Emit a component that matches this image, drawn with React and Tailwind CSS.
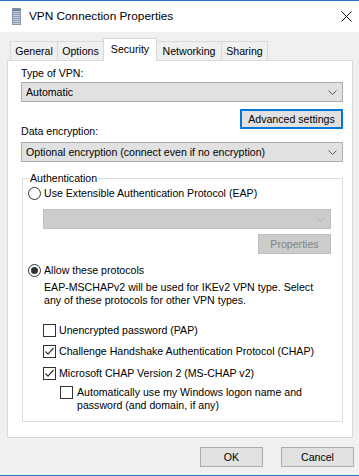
import React from "react";

function Chevron({ disabled }) {
  return (
    <svg width="9" height="5" viewBox="0 0 9 5" className="shrink-0">
      <path d="M0.5 0.5 L4.5 4.5 L8.5 0.5" fill="none" stroke={disabled ? "#a8a8a8" : "#5a5a5a"} strokeWidth="1" />
    </svg>
  );
}

function Select({ text, disabled, className }) {
  return (
    <div
      className={
        (disabled
          ? "bg-[#cccccc] border-[#bfbfbf] "
          : "bg-[#e1e1e1] border-[#adadad] ") +
        "h-[20px] flex items-center border pl-[4px] pr-[5px] " +
        (className || "")
      }
    >
      <span className="flex-1 whitespace-nowrap">{text}</span>
      <Chevron disabled={disabled} />
    </div>
  );
}

function Radio({ checked }) {
  return (
    <svg width="13" height="13" viewBox="0 0 13 13" className="shrink-0">
      <circle cx="6.5" cy="6.5" r="6" fill="#fff" stroke="#333" strokeWidth="1" />
      {checked && <circle cx="6.5" cy="6.5" r="3.5" fill="#333" />}
    </svg>
  );
}

function Check({ checked }) {
  return (
    <svg width="13" height="13" viewBox="0 0 13 13" className="shrink-0">
      <rect x="0.5" y="0.5" width="12" height="12" fill="#fff" stroke="#333" strokeWidth="1" />
      {checked && (
        <path d="M2.5 6.5 L5 9.2 L10.5 3" fill="none" stroke="#333" strokeWidth="1.2" />
      )}
    </svg>
  );
}

function TitleIcon() {
  return (
    <svg width="9" height="17" viewBox="0 0 9 17" className="shrink-0">
      <rect x="0.5" y="0.5" width="8" height="16" fill="#c3cddb" stroke="#8595ad" />
      <rect x="1" y="1" width="7" height="2" fill="#6f7f98" />
      <rect x="1" y="4" width="7" height="1" fill="#8d9cb3" />
      <rect x="1" y="6" width="7" height="1" fill="#8d9cb3" />
      <rect x="1" y="8" width="7" height="1" fill="#8d9cb3" />
      <rect x="1" y="10" width="7" height="1" fill="#8d9cb3" />
      <rect x="1" y="12" width="7" height="1" fill="#8d9cb3" />
      <rect x="1" y="14" width="7" height="1" fill="#8d9cb3" />
    </svg>
  );
}

function Tab({ label, width, selected }) {
  return (
    <div
      className={
        (selected
          ? "h-[23px] bg-white mb-[-1px] relative z-20 pb-[2px] "
          : "h-[19px] bg-[#f0f0f0] ") +
        "-ml-px first:ml-0 border-t border-l border-r border-[#d9d9d9] flex items-center justify-center whitespace-nowrap"
      }
      style={{ width }}
    >
      {label}
    </div>
  );
}

export default function App() {
  return (
    <div className="w-[359px] h-[476px] bg-[#f0f0f0] border-t border-b border-[#2b79d0] flex flex-col font-['Liberation_Sans',Arial,sans-serif] text-[10.6px] leading-[13px] text-black overflow-hidden">
      {/* Title bar */}
      <div className="h-[31px] shrink-0 bg-white flex items-center">
        <div className="ml-[12px]">
          <TitleIcon />
        </div>
        <span className="ml-[8px] text-[11.8px] leading-[15px]">VPN Connection Properties</span>
        <svg width="11" height="11" viewBox="0 0 11 11" className="ml-auto mr-[7px]">
          <path d="M0.5 0.5 L10.5 10.5 M10.5 0.5 L0.5 10.5" stroke="#111" strokeWidth="1" />
        </svg>
      </div>

      {/* Tabs */}
      <div className="mt-[6px] h-[22px] shrink-0 flex items-end pl-[10px] relative z-10">
        <Tab label="General" width={48} />
        <Tab label="Options" width={47} />
        <Tab label="Security" width={54} selected />
        <Tab label="Networking" width={66} />
        <Tab label="Sharing" width={47} />
      </div>

      {/* Tab panel */}
      <div className="ml-[7px] w-[346px] h-[378px] shrink-0 bg-white border border-[#d9d9d9] pl-[13px] pr-[9px] pt-[6px] flex flex-col">
        <div className="h-[13px]">Type of VPN:</div>
        <Select text="Automatic" className="mt-[2px]" />
        <div className="mt-[7px] flex justify-end">
          <div className="h-[20px] w-[103px] border-2 border-[#0078d7] bg-[#e1e1e1] flex items-center justify-center whitespace-nowrap">
            Advanced settings
          </div>
        </div>
        <div className="mt-[-4px] h-[13px]">Data encryption:</div>
        <Select text="Optional encryption (connect even if no encryption)" className="mt-[4px]" />

        {/* Authentication group */}
        <div className="mt-[16px] ml-[1px] relative border border-[#dcdcdc] pl-[5px] pt-[8px] pb-[9px] flex flex-col">
          <span className="absolute left-[6px] top-[-7px] px-[1px] bg-white leading-[13px]">
            Authentication
          </span>
          <div className="h-[13px] flex items-center gap-[3px] whitespace-nowrap">
            <Radio />
            <span>Use Extensible Authentication Protocol (EAP)</span>
          </div>
          <Select text="" disabled className="mt-[9px] ml-[15px] mr-[11px]" />
          <div className="mt-[5px] mr-[11px] flex justify-end">
            <div className="h-[20px] w-[73px] border border-[#bfbfbf] bg-[#cccccc] text-[#838383] flex items-center justify-center">
              Properties
            </div>
          </div>
          <div className="mt-[10px] h-[13px] flex items-center gap-[3px] whitespace-nowrap">
            <Radio checked />
            <span>Allow these protocols</span>
          </div>
          <div className="mt-[4px] ml-[16px] whitespace-nowrap">
            EAP-MSCHAPv2 will be used for IKEv2 VPN type. Select
            <br />
            any of these protocols for other VPN types.
          </div>
          <div className="mt-[17px] ml-[15px] h-[13px] flex items-center gap-[3px] whitespace-nowrap">
            <Check />
            <span>Unencrypted password (PAP)</span>
          </div>
          <div className="mt-[8px] ml-[15px] h-[13px] flex items-center gap-[3px] whitespace-nowrap">
            <Check checked />
            <span>Challenge Handshake Authentication Protocol (CHAP)</span>
          </div>
          <div className="mt-[9px] ml-[15px] h-[13px] flex items-center gap-[3px] whitespace-nowrap">
            <Check checked />
            <span>Microsoft CHAP Version 2 (MS-CHAP v2)</span>
          </div>
          <div className="mt-[6px] ml-[32px] flex items-start gap-[4px] whitespace-nowrap">
            <Check />
            <span>
              Automatically use my Windows logon name and
              <br />
              password (and domain, if any)
            </span>
          </div>
        </div>
      </div>

      {/* Bottom buttons */}
      <div className="mt-[9px] flex justify-end gap-[18px] mr-[5px]">
        <div className="h-[20px] w-[63px] border border-[#adadad] bg-[#e1e1e1] flex items-center justify-center">
          OK
        </div>
        <div className="h-[20px] w-[73px] border border-[#adadad] bg-[#e1e1e1] flex items-center justify-center">
          Cancel
        </div>
      </div>
    </div>
  );
}
